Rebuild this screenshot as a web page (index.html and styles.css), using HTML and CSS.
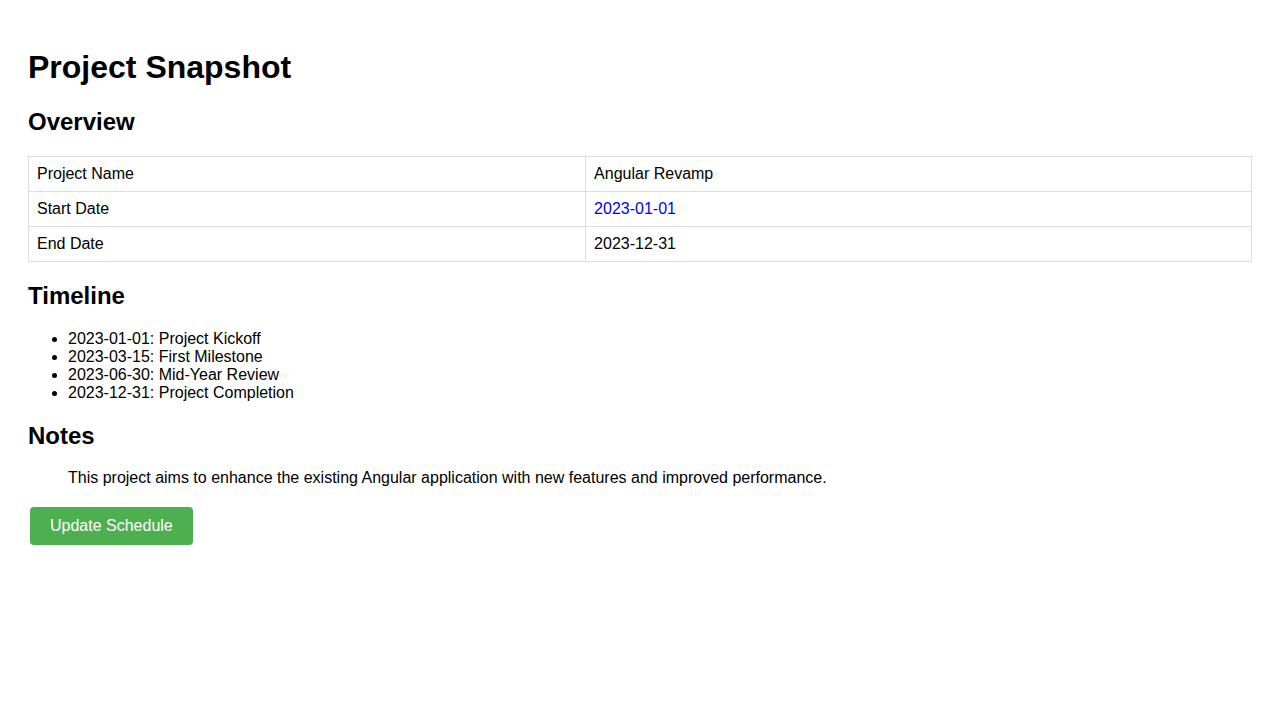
FILE: index.html
```html
<!DOCTYPE html>
<html lang="en">
<head>
<meta charset="utf-8">
<title>Project Snapshot</title>
<link rel="stylesheet" href="styles.css">
</head>
<body>
<div class="page">
  <h1>Project Snapshot</h1>
  <h2>Overview</h2>
  <table class="overview">
    <tr><td>Project Name</td><td>Angular Revamp</td></tr>
    <tr><td>Start Date</td><td class="highlight">2023-01-01</td></tr>
    <tr><td>End Date</td><td>2023-12-31</td></tr>
  </table>
  <h2>Timeline</h2>
  <ul class="timeline">
    <li>2023-01-01: Project Kickoff</li>
    <li>2023-03-15: First Milestone</li>
    <li>2023-06-30: Mid-Year Review</li>
    <li>2023-12-31: Project Completion</li>
  </ul>
  <h2>Notes</h2>
  <p class="notes">This project aims to enhance the existing Angular application with new features and improved performance.</p>
  <div class="actions">
    <button class="btn" type="button">Update Schedule</button>
  </div>
</div>
</body>
</html>
```

FILE: styles.css
```css
body {
  margin: 8px;
  font-family: "Liberation Sans", Arial, sans-serif;
  color: #000;
  background: #fff;
}
.page {
  padding: 20px;
}
h1 {
  font-size: 32px;
  margin: 21.44px 0;
}
h2 {
  font-size: 24px;
  margin: 19.92px 0;
}
.overview {
  width: 100%;
  border-collapse: collapse;
  font-size: 16px;
}
.overview td {
  border: 1px solid #ddd;
  padding: 8px;
  text-align: left;
}
.highlight {
  color: #0000ff;
}
.timeline {
  margin: 16px 0;
  padding-left: 40px;
}
.notes {
  margin: 16px 40px;
}
.actions {
  padding: 4px 2px 0;
}
.btn {
  background: #4caf50;
  color: #fff;
  border: none;
  border-radius: 4px;
  padding: 10px 20px;
  font-family: "Liberation Sans", Arial, sans-serif;
  font-size: 16px;
  line-height: 18px;
  cursor: pointer;
}
```
